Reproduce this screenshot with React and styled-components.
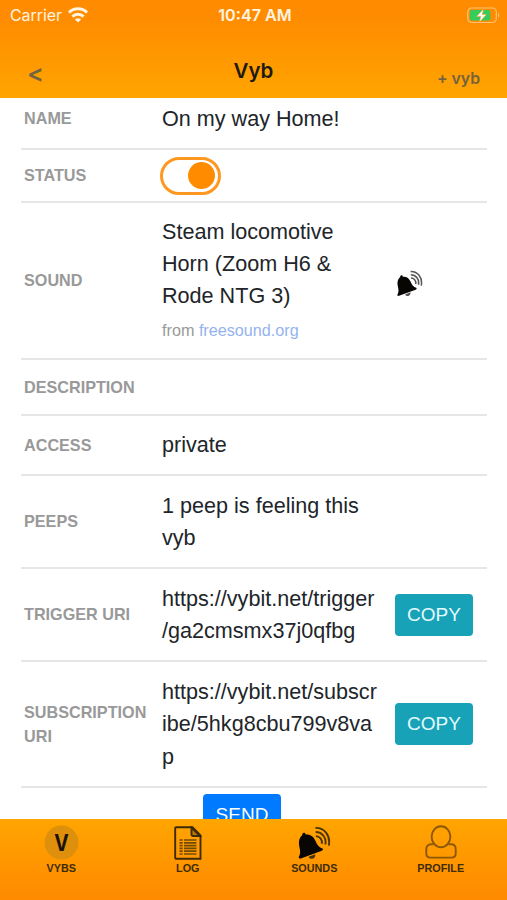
import { useState } from 'react';
import styled, { createGlobalStyle } from 'styled-components';

const GlobalStyle = createGlobalStyle`
  * { box-sizing: border-box; }
  body {
    margin: 0;
    background: #fff;
    font-family: "Liberation Sans", Arial, sans-serif;
    color: #212529;
  }
`;

const Screen = styled.div`
  display: flex;
  flex-direction: column;
  width: 507px;
  height: 900px;
  overflow: hidden;
`;

const Header = styled.header`
  flex: none;
  height: 98px;
  background: linear-gradient(#ff8c00 20%, #ffa500);
  font-family: Inter, sans-serif;
`;

const StatusBar = styled.div`
  display: grid;
  grid-template-columns: 1fr auto 1fr;
  align-items: center;
  height: 30px;
  padding: 0 7px 0 10px;
  color: #fff4e0;
`;

const Carrier = styled.div`
  display: flex;
  align-items: center;
  gap: 6px;
  font-size: 15.9px;
`;

const Clock = styled.div`
  font-weight: 600;
  font-size: 16.2px;
`;

const Battery = styled.div`
  display: flex;
  justify-content: flex-end;
`;

const NavBar = styled.nav`
  display: grid;
  grid-template-columns: 1fr auto 1fr;
  align-items: center;
  height: 68px;
  padding: 14px 27px 0;
`;

const NavButton = styled.button`
  justify-self: ${({ $end }) => ($end ? 'end' : 'start')};
  padding: ${({ $end }) => ($end ? '15px 0 0' : '4px 0 0')};
  border: none;
  background: none;
  color: #74633f;
  font-family: inherit;
  font-weight: 600;
  font-size: ${({ $end }) => ($end ? '15.8px' : '25px')};
  line-height: 20px;
  cursor: pointer;
`;

const Title = styled.h1`
  margin: 0;
  font-size: 20.5px;
  font-weight: 600;
  line-height: 26px;
  color: #1c1a12;
`;

const Content = styled.main`
  flex: 1;
  min-height: 0;
  overflow: hidden;
  padding: 0 20px 0 21px;
`;

const Details = styled.div`
  margin-top: -9px;
`;

const Row = styled.div`
  display: grid;
  grid-template-columns: 138px 217px 1fr;
  align-items: center;
  height: ${({ $height }) => $height}px;
  padding-left: 3px;
  border-bottom: 2px solid #e6e6e6;
`;

const Label = styled.div`
  font-size: 16.2px;
  font-weight: bold;
  line-height: 24.3px;
  text-transform: uppercase;
  color: #999;
`;

const Value = styled.div`
  padding-top: 1.4px;
  font-size: 21.6px;
  line-height: 32.4px;
  line-break: ${({ $breakAll }) => ($breakAll ? 'anywhere' : 'auto')};
`;

const Source = styled.div`
  font-size: 16.2px;
  line-height: 34px;
  color: #999;
`;

const SourceLink = styled.a`
  color: #94b4ee;
  text-decoration: none;
`;

const Action = styled.div`
  padding-left: 16px;
  display: flex;
`;

const SoundAction = styled(Action)`
  padding: 5px 0 0 17px;
`;

const Button = styled.button`
  width: 78px;
  height: 42px;
  padding: 0;
  border: none;
  border-radius: 4px;
  background: ${({ $primary }) => ($primary ? '#007bff' : '#17a2b8')};
  color: ${({ $primary }) => ($primary ? '#fff' : '#e4fbff')};
  font-family: inherit;
  font-size: 19px;
  cursor: pointer;
`;

const SendRow = styled.div`
  display: flex;
  justify-content: center;
  padding: 6px 24px 0 0;
`;

const Toggle = styled.button`
  display: flex;
  align-items: center;
  justify-content: ${({ $on }) => ($on ? 'flex-end' : 'flex-start')};
  width: 61px;
  height: 38px;
  margin-left: -2.5px;
  padding: 0 3px;
  border: 3px solid #ff9820;
  border-radius: 19px;
  background: #fff;
  cursor: pointer;
`;

const Knob = styled.span`
  width: 27px;
  height: 27px;
  border-radius: 50%;
  background: #ff8c00;
`;

const TabBar = styled.nav`
  flex: none;
  display: grid;
  grid-template-columns: repeat(4, 126.5px);
  height: 81px;
  padding-top: 6px;
  background: linear-gradient(#ffa500, #ff8c00 90%);
`;

const Tab = styled.a`
  display: flex;
  flex-direction: column;
  align-items: center;
  padding-right: 4px;
  color: #3d2c08;
  font-size: 10.8px;
  font-weight: bold;
  line-height: 14px;
`;

const TabIcon = styled.span`
  display: flex;
  align-items: center;
  height: 35px;
  margin-bottom: 1px;
`;

const WifiIcon = () => (
  <svg width="20" height="16" viewBox="0 0 20 16" fill="none" stroke="#fff4e0" strokeWidth="3">
    <path d="M1 5.6C6 .6 14 .6 19 5.6" />
    <path d="M4.4 9.6C7.6 6.5 12.4 6.5 15.6 9.6" />
    <path d="M10 15.4L6.9 12.4C8.7 10.9 11.3 10.9 13.1 12.4Z" fill="#fff4e0" stroke="none" />
  </svg>
);

const BatteryIcon = () => (
  <svg width="33" height="17" viewBox="0 0 33 17">
    <rect x=".8" y="1" width="28.5" height="14.5" rx="4" fill="none" stroke="#ffc27a" strokeWidth="1.2" />
    <path d="M31 6v4.5c1.6-.6 1.6-3.9 0-4.5z" fill="#ffc27a" />
    <rect x="2.8" y="3" width="20.5" height="10.5" rx="2" fill="#34cc5a" />
    <path d="M16.7 1.8L9.5 9.4h4.2l-1.4 5.8 7.2-7.7h-4.2z" fill="#fff" stroke="#ff9b28" strokeWidth=".6" />
  </svg>
);

const BellIcon = ({ size, wave = '#4a3305' }) => (
  <svg width={size} height={size} viewBox="0 0 32 33">
    <path
      d="M4.6 9C4.2 6.3 7.3 5.4 8 8.2C12.4 7.8 15.6 10 17.4 14.4C19 18.6 21 21 24.2 21.8C25.2 22.4 24.8 23.6 23.6 24.1L3.2 31.6C1.4 32.1 .6 30.6 1.6 29.2C3 26.8 2.6 24.2 1.9 20.6C.9 15.8 1.2 11.6 4.6 9Z"
      fill="#080603"
    />
    <path d="M10.8 29.8L17.2 27.3C17.7 29.5 16.4 31.3 14.4 31.8C12.8 32.1 11.2 31.3 10.8 29.8Z" fill={wave} />
    <g fill="none" stroke={wave} strokeWidth="1.8">
      <path d="M17.4 1.8C26.2 1.6 32.2 9.2 30.4 19" />
      <path d="M17.6 5.8C23.8 5.8 28.4 11.4 27 18" />
      <path d="M17.8 9.8C21.4 9.8 24.4 13 23.6 17.2" />
    </g>
  </svg>
);

const VybsIcon = () => (
  <svg width="35" height="35" viewBox="0 0 35 35">
    <circle cx="17.5" cy="17.5" r="17" fill="#de900c" />
    <text
      x="17.5"
      y="25.5"
      textAnchor="middle"
      textLength="14.5"
      lengthAdjust="spacingAndGlyphs"
      fontFamily="Inter, sans-serif"
      fontSize="22.5"
      fontWeight="700"
      fill="#1a1305"
    >
      V
    </text>
  </svg>
);

const LogIcon = () => (
  <svg width="28" height="34" viewBox="0 0 28 34" fill="none" stroke="#3f2a08" strokeWidth="1.9">
    <path d="M2.2 1.2H18.5L26.5 9.5V32.8H2.2A1 1 0 0 1 1.2 31.8V2.2A1 1 0 0 1 2.2 1.2Z" />
    <path d="M17.5 1.5V8.2A1.8 1.8 0 0 0 19.3 10H26L17.5 1.5Z" fill="#b8780a" />
    <path
      d="M5.5 14H8.7M10 14H22.5M5.5 16.8H8.7M10 16.8H22.5M5.5 19.6H8.7M10 19.6H22.5M5.5 22.4H8.7M10 22.4H22.5M5.5 25.2H8.7M10 25.2H22.5M5.5 28H8.7M10 28H22.5"
      strokeWidth="1.7"
      stroke="#714a08"
    />
  </svg>
);

const ProfileIcon = () => (
  <svg width="32" height="35" viewBox="0 0 32 35" fill="none" stroke="#8c5806" strokeWidth="1.9">
    <ellipse cx="16" cy="11.7" rx="9.4" ry="10.5" />
    <path d="M8.5 19.2H6C3 19.2 1.3 21.2 1.3 24V28.5C1.3 31.2 2.8 32.6 5.5 32.6H26.5C29.2 32.6 30.7 31.2 30.7 28.5V24C30.7 21.2 29 19.2 26 19.2H23.5" />
  </svg>
);

const tabs = [
  { name: 'VYBS', icon: <VybsIcon /> },
  { name: 'LOG', icon: <LogIcon /> },
  { name: 'SOUNDS', icon: <BellIcon size={34} /> },
  { name: 'PROFILE', icon: <ProfileIcon /> },
];

const triggerUri = 'https://vybit.net/trigger/ga2cmsmx37j0qfbg';
const subscriptionUri = 'https://vybit.net/subscribe/5hkg8cbu799v8vap';

function App() {
  const [enabled, setEnabled] = useState(true);

  const copy = (uri) => navigator.clipboard?.writeText(uri);

  return (
    <Screen>
      <GlobalStyle />
      <Header>
        <StatusBar>
          <Carrier>
            Carrier
            <WifiIcon />
          </Carrier>
          <Clock>10:47 AM</Clock>
          <Battery>
            <BatteryIcon />
          </Battery>
        </StatusBar>
        <NavBar>
          <NavButton>&lt;</NavButton>
          <Title>Vyb</Title>
          <NavButton $end>+ vyb</NavButton>
        </NavBar>
      </Header>
      <Content>
        <Details>
          <Row $height={61}>
            <Label>Name</Label>
            <Value>On my way Home!</Value>
          </Row>
          <Row $height={53}>
            <Label>Status</Label>
            <Toggle $on={enabled} onClick={() => setEnabled(!enabled)}>
              <Knob />
            </Toggle>
          </Row>
          <Row $height={157}>
            <Label>Sound</Label>
            <div>
              <Value>Steam locomotive Horn (Zoom H6 &amp; Rode NTG 3)</Value>
              <Source>
                from <SourceLink>freesound.org</SourceLink>
              </Source>
            </div>
            <SoundAction>
              <BellIcon size={27} wave="#555" />
            </SoundAction>
          </Row>
          <Row $height={56}>
            <Label>Description</Label>
          </Row>
          <Row $height={60}>
            <Label>Access</Label>
            <Value>private</Value>
          </Row>
          <Row $height={93}>
            <Label>Peeps</Label>
            <Value>1 peep is feeling this vyb</Value>
          </Row>
          <Row $height={93}>
            <Label>Trigger URI</Label>
            <Value $breakAll>{triggerUri}</Value>
            <Action>
              <Button onClick={() => copy(triggerUri)}>COPY</Button>
            </Action>
          </Row>
          <Row $height={126}>
            <Label>Subscription URI</Label>
            <Value $breakAll>{subscriptionUri}</Value>
            <Action>
              <Button onClick={() => copy(subscriptionUri)}>COPY</Button>
            </Action>
          </Row>
        </Details>
        <SendRow>
          <Button $primary>SEND</Button>
        </SendRow>
      </Content>
      <TabBar>
        {tabs.map(({ name, icon }) => (
          <Tab key={name}>
            <TabIcon>{icon}</TabIcon>
            {name}
          </Tab>
        ))}
      </TabBar>
    </Screen>
  );
}

export default App;
